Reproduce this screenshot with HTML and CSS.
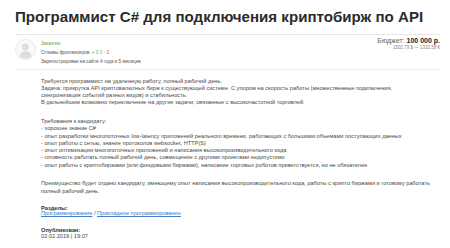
FILE: index.html
```html
<!DOCTYPE html>
<html lang="ru">
<head>
    <meta charset="UTF-8">
    <title>Программист C# для подключения криптобирж по API</title>
    <link rel="stylesheet" href="styles.css">
</head>
<body>
<div class="page">
    <h1 class="title">Программист C# для подключения криптобирж по API</h1>

    <div class="owner">
        <div class="avatar">
            <svg width="21" height="21" viewBox="0 0 21 21">
                <circle cx="10.5" cy="10.5" r="10" fill="#fafafa" stroke="#e2e2e2" stroke-width="0.8"/>
                <circle cx="10.5" cy="8" r="3.4" fill="#dedede"/>
                <path d="M4.5 17.5 C5 13.5 7.5 12.3 10.5 12.3 C13.5 12.3 16 13.5 16.5 17.5 C14.8 19 12.8 19.6 10.5 19.6 C8.2 19.6 6.2 19 4.5 17.5 Z" fill="#dedede"/>
            </svg>
        </div>
        <div class="owner-info">
            <div class="owner-role">Заказчик</div>
            <div>Отзывы фрилансеров: <span class="plus">+ 0</span> <span class="zero">0</span> <span class="minus">- 0</span></div>
            <div>Зарегистрирован на сайте 4 года и 5 месяцев</div>
        </div>
        <div class="budget">
            <div class="budget-main">Бюджет: <b>100 000 р.</b></div>
            <div class="budget-conv">1502.79 $ — 1332.58 €</div>
        </div>
    </div>

    <div class="desc">
        <p>Требуется программист на удаленную работу, полный рабочий день.<br>
        Задача: прикрутка API криптовалютных бирж к существующей системе. С упором на скорость работы (множественные подключения,<br>
        синхронизация событий разных видов) и стабильность.<br>
        В дальнейшем возможно переключение на другие задачи, связанные с высокочастотной торговлей.</p>

        <p>Требования к кандидату:<br>
        - хорошее знание C#<br>
        - опыт разработки многопоточных low-latency приложений реального времени, работающих с большими объемами поступающих данных<br>
        - опыт работы с сетью, знание протоколов websocket, HTTP(S)<br>
        - опыт оптимизации многопоточных приложений и написания высокопроизводительного кода<br>
        - готовность работать полный рабочий день, совмещение с другими проектами недопустимо<br>
        - опыт работы с криптобиржами (или фондовыми биржами), написание торговых роботов приветствуется, но не обязателен</p>

        <p>Преимущество будет отдано кандидату, имеющему опыт написания высокопроизводительного кода, работы с крипто биржами и готовому работать<br>
        полный рабочий день.</p>

        <div class="meta">
            <div class="meta-label">Разделы:</div>
            <a href="#">Программирование</a> / <a href="#">Прикладное программирование</a>
        </div>

        <div class="meta">
            <div class="meta-label">Опубликован:</div>
            <div class="meta-date">02.02.2019 | 19:07</div>
        </div>
    </div>
</div>
</body>
</html>
```

FILE: styles.css
```css
body {
    font-family: "Liberation Sans", Arial, sans-serif;
    margin: 0;
    padding: 0;
    background-color: #fff;
    color: #4a4a4a;
}

.page {
    padding: 0 10px 0 15px;
}

.title {
    font-size: 15.1px;
    line-height: 17px;
    font-weight: bold;
    color: #2b2b2b;
    margin: 0;
    padding: 8px 0 9px;
    border-bottom: 1px solid #e6e6e6;
}

.owner {
    display: flex;
    align-items: flex-start;
    padding: 4px 0 3px;
    border-bottom: 1px solid #ececec;
}

.avatar {
    width: 26px;
    height: 21px;
}

.owner-info {
    flex: 1;
    font-size: 4.7px;
    line-height: 9px;
    color: #555;
}

.owner-role {
    color: #6aa832;
}

.plus {
    color: #6aa832;
}

.zero {
    color: #999;
}

.minus {
    color: #d9534f;
}

.budget {
    text-align: right;
    margin-top: -2px;
}

.budget-main {
    font-size: 7px;
    line-height: 8px;
    color: #666;
}

.budget-main b {
    color: #222;
}

.budget-conv {
    font-size: 4.5px;
    line-height: 5px;
    color: #888;
}

.desc {
    padding: 7.5px 0 0 26px;
    font-size: 5.65px;
    line-height: 7.3px;
}

.desc p {
    margin: 0 0 11.3px;
}

.desc p:nth-of-type(3) {
    margin-bottom: 10.6px;
}

.meta {
    line-height: 5.5px;
    margin-bottom: 11.5px;
}

.meta-label {
    font-weight: bold;
    color: #333;
}

.meta a {
    color: #3d7ec4;
}
```
